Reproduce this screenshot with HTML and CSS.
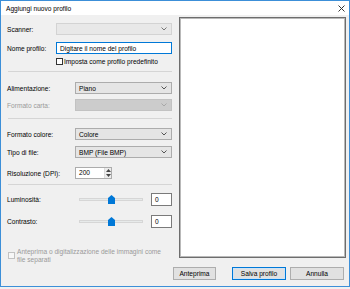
FILE: index.html
```html
<!DOCTYPE html>
<html>
<head>
  <title>Aggiungi nuovo profilo</title>
  <link rel="stylesheet" href="styles.css">
</head>
<body>

<div class="window">
  <div class="titlebar">
    <span class="title">Aggiungi nuovo profilo</span>
    <svg class="close" width="7" height="7" viewBox="0 0 7 7"><path d="M0.5 0.5L6.5 6.5M6.5 0.5L0.5 6.5" stroke="#333" stroke-width="1"/></svg>
  </div>

  <div class="content">
    <div class="left">
      <div class="row first">
        <span class="label short">Scanner:</span>
        <div class="select pale"><span></span><svg class="arrow" width="6" height="4" viewBox="0 0 6 4"><path d="M0.5 0.5L3 3L5.5 0.5" fill="none" stroke="#777"/></svg></div>
      </div>
      <div class="row gap7">
        <span class="label short">Nome profilo:</span>
        <div class="input active">Digitare il nome del profilo</div>
      </div>
      <div class="check-row">
        <span class="box"></span>
        <span>Imposta come profilo predefinito</span>
      </div>

      <div class="sep sep1"></div>

      <div class="row">
        <span class="label">Alimentazione:</span>
        <div class="select"><span>Piano</span><svg class="arrow" width="6" height="4" viewBox="0 0 6 4"><path d="M0.5 0.5L3 3L5.5 0.5" fill="none" stroke="#555"/></svg></div>
      </div>
      <div class="row gap5">
        <span class="label disabled">Formato carta:</span>
        <div class="select off"><span></span><svg class="arrow" width="6" height="4" viewBox="0 0 6 4"><path d="M0.5 0.5L3 3L5.5 0.5" fill="none" stroke="#a8a8a8"/></svg></div>
      </div>

      <div class="sep sep2"></div>

      <div class="row">
        <span class="label">Formato colore:</span>
        <div class="select"><span>Colore</span><svg class="arrow" width="6" height="4" viewBox="0 0 6 4"><path d="M0.5 0.5L3 3L5.5 0.5" fill="none" stroke="#555"/></svg></div>
      </div>
      <div class="row gap6">
        <span class="label">Tipo di file:</span>
        <div class="select"><span>BMP (File BMP)</span><svg class="arrow" width="6" height="4" viewBox="0 0 6 4"><path d="M0.5 0.5L3 3L5.5 0.5" fill="none" stroke="#555"/></svg></div>
      </div>
      <div class="row gap9">
        <span class="label">Risoluzione (DPI):</span>
        <div class="spin">
          <div class="spin-text">200</div>
          <div class="spin-btns">
            <span><svg width="5" height="3" viewBox="0 0 5 3"><path d="M0 3L2.5 0L5 3Z" fill="#444"/></svg></span>
            <span><svg width="5" height="3" viewBox="0 0 5 3"><path d="M0 0L2.5 3L5 0Z" fill="#444"/></svg></span>
          </div>
        </div>
      </div>

      <div class="sep sep3"></div>

      <div class="row tall gap8">
        <span class="label">Luminosità:</span>
        <div class="slider">
          <div class="track"></div>
          <svg class="thumb" width="7" height="9" viewBox="0 0 7 9"><path d="M3.5 0L7 3V9H0V3Z" fill="#0078d7"/></svg>
        </div>
        <div class="value">0</div>
      </div>
      <div class="row tall gap9">
        <span class="label">Contrasto:</span>
        <div class="slider">
          <div class="track"></div>
          <svg class="thumb" width="7" height="9" viewBox="0 0 7 9"><path d="M3.5 0L7 3V9H0V3Z" fill="#0078d7"/></svg>
        </div>
        <div class="value">0</div>
      </div>

      <div class="check-row multi">
        <span class="box off"></span>
        <span class="disabled">Anteprima o digitalizzazione delle immagini come<br>file separati</span>
      </div>
    </div>

    <div class="right">
      <div class="preview"></div>
      <div class="buttons">
        <button class="btn">Anteprima</button>
        <button class="btn default">Salva profilo</button>
        <button class="btn">Annulla</button>
      </div>
    </div>
  </div>
</div>

</body>
</html>
```

FILE: styles.css
```css
html, body {
  margin: 0;
  padding: 0;
}
body {
  width: 350px;
  height: 289px;
  overflow: hidden;
  font-family: "Liberation Sans", Arial, sans-serif;
  font-size: 6.6px;
  color: #000;
  background: #f0f0f0;
}
.window {
  box-sizing: border-box;
  width: 350px;
  height: 287px;
  border: 1px solid #3c8fd8;
  background: #f0f0f0;
  display: flex;
  flex-direction: column;
}
.titlebar {
  height: 14px;
  background: #fff;
  display: flex;
  align-items: center;
  justify-content: space-between;
  padding: 0 4px 0 5px;
  flex-shrink: 0;
}
.title {
  font-size: 6.6px;
  color: #000;
}
.close {
  display: block;
}
.content {
  flex: 1;
  display: flex;
}
.left {
  width: 172px;
  padding: 8px 1px 0 6px;
  box-sizing: border-box;
}
.row {
  display: flex;
  align-items: center;
  height: 12px;
  margin-top: 5px;
}
.row.first {
  margin-top: 0;
}
.row.tall {
  height: 13px;
}
.gap5 { margin-top: 5px; }
.gap6 { margin-top: 6px; }
.gap7 { margin-top: 7px; }
.gap8 { margin-top: 8px; }
.gap9 { margin-top: 9px; }
.label {
  width: 68px;
  flex-shrink: 0;
  white-space: nowrap;
}
.label.short {
  width: 49px;
}
.disabled {
  color: #9a9a9a;
}
.select, .input {
  flex: 1;
  height: 12px;
  box-sizing: border-box;
  display: flex;
  align-items: center;
  justify-content: space-between;
  padding: 0 4px 0 3px;
}
.select {
  background: #e5e5e5;
  border: 1px solid #acacac;
}
.select.pale {
  background: #e8e8e8;
  border-color: #d3d3d3;
}
.select.off {
  background: #cccccc;
  border-color: #c2c2c2;
}
.arrow {
  display: block;
}
.input {
  background: #fff;
  border: 1px solid #0078d7;
}
.check-row {
  display: flex;
  align-items: center;
  height: 7px;
  margin: 4px 0 0 49px;
}
.box {
  width: 7px;
  height: 7px;
  box-sizing: border-box;
  border: 1px solid #333;
  background: #fff;
  margin-right: 1px;
}
.box.off {
  border-color: #c2c2c2;
  background: #f7f7f7;
  margin-right: 2px;
}
.check-row.multi {
  height: 15px;
  margin: 20px 0 0 1px;
  line-height: 7.5px;
}
.sep {
  height: 0;
  border-top: 1px solid #d5d5d5;
  margin-left: 1px;
}
.sep1 { margin-top: 6px; margin-bottom: 10px; }
.sep2 { margin-top: 7px; margin-bottom: 9px; }
.sep3 { margin-top: 5px; }
.spin {
  display: flex;
  height: 12px;
  width: 37px;
  box-sizing: border-box;
  border: 1px solid #acacac;
  background: #fff;
}
.spin-text {
  flex: 1;
  padding-left: 3px;
  line-height: 10px;
}
.spin-btns {
  width: 6px;
  display: flex;
  flex-direction: column;
  border-left: 1px solid #dcdcdc;
}
.spin-btns span {
  flex: 1;
  display: flex;
  align-items: center;
  justify-content: center;
  background: #ececec;
}
.spin-btns svg {
  display: block;
}
.slider {
  position: relative;
  width: 64px;
  height: 13px;
  margin-left: 4px;
  margin-right: 8px;
}
.track {
  position: absolute;
  left: 0;
  right: 0;
  top: 5px;
  height: 3px;
  box-sizing: border-box;
  background: #e7eaea;
  border: 1px solid #d6d6d6;
}
.thumb {
  position: absolute;
  left: 29px;
  top: 2px;
}
.value {
  width: 21px;
  height: 13px;
  box-sizing: border-box;
  border: 1px solid #7a7a7a;
  background: #fff;
  padding-left: 3px;
  line-height: 11px;
}
.right {
  flex: 1;
  display: flex;
  flex-direction: column;
}
.preview {
  margin: 2px 3px 0 6px;
  height: 241px;
  box-sizing: border-box;
  background: #fff;
  border: 1px solid #6d6d6d;
  box-shadow: inset 0 0 0 1px #b9b9b9;
}
.buttons {
  display: flex;
  margin-top: 9px;
}
.btn {
  height: 13px;
  box-sizing: border-box;
  border: 1px solid #adadad;
  background: #e1e1e1;
  font-family: "Liberation Sans", Arial, sans-serif;
  font-size: 6.6px;
  color: #000;
  padding: 0;
  margin: 0;
}
.btn:nth-child(1) { width: 43px; }
.btn:nth-child(2) { width: 54px; margin-left: 16px; }
.btn:nth-child(3) { width: 54px; margin-left: 4px; }
.btn.default {
  border-color: #0078d7;
  box-shadow: inset 0 0 0 1px #cfe3f5;
}
```
